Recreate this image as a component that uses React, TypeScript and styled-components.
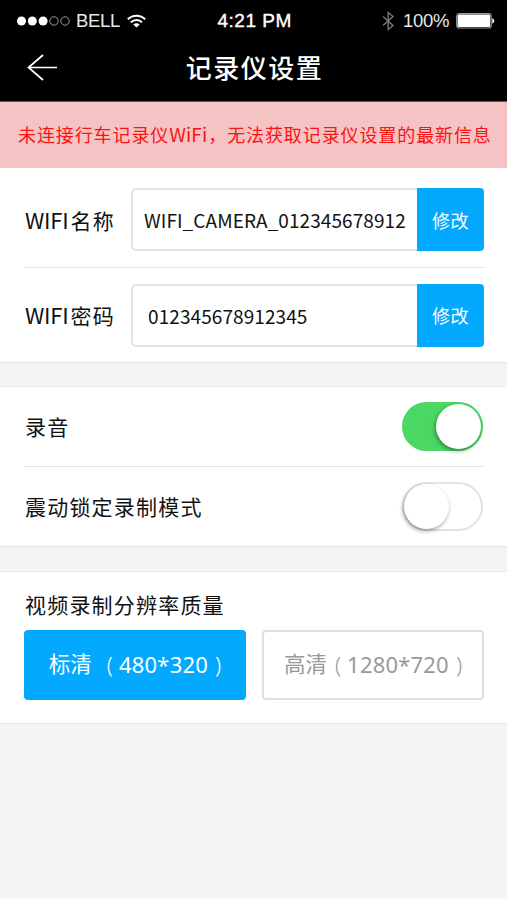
import React, { useState } from "react"
import styled, { createGlobalStyle } from "styled-components"

const GlobalStyle = createGlobalStyle`
  * {
    box-sizing: border-box;
  }
  body {
    margin: 0;
    background: #f4f4f4;
    font-family: "Noto Sans CJK SC", "Noto Sans", sans-serif;
    color: #111;
  }
  button {
    font-family: inherit;
    border: 0;
    padding: 0;
    margin: 0;
    cursor: pointer;
  }
`

const PageTag = styled.div`
  width: 507px;
  height: 900px;
  overflow: hidden;
  background: #f4f4f4;
  border-bottom: 2px solid #fafafa;
`

const HeaderTag = styled.header`
  height: 102px;
  background: #000;
  color: #fff;
  border-bottom: 1px solid #6b5556;
`

const StatusBarTag = styled.div`
  display: grid;
  grid-template-columns: 1fr auto 1fr;
  align-items: center;
  height: 41px;
  padding: 0 12px 0 17px;
  font-family: "Liberation Sans", Arial, sans-serif;
  line-height: 41px;
`

const StatusGroupTag = styled.div<{ $end?: boolean }>`
  display: flex;
  align-items: center;
  justify-content: ${(p) => (p.$end ? "flex-end" : "flex-start")};
  svg {
    flex: none;
  }
`

const StatusTextTag = styled.span<{ $width: number; $indent: number }>`
  width: ${(p) => p.$width}px;
  padding-left: ${(p) => p.$indent}px;
  font-size: 18.5px;
  letter-spacing: -0.3px;
  color: #e8e8e8;
  white-space: nowrap;
`

const ClockTag = styled.span`
  width: 77px;
  font-size: 19px;
  letter-spacing: 0.5px;
  -webkit-text-stroke: 0.4px #fff;
  white-space: nowrap;
`

const TitleBarTag = styled.div`
  display: grid;
  grid-template-columns: 60px 1fr 60px;
  align-items: center;
  height: 52px;
`

const BackTag = styled.button`
  background: none;
  color: #fff;
  padding-left: 26px;
  svg {
    display: block;
  }
`

const TitleTag = styled.h1`
  margin: 0;
  padding-left: 2px;
  font-size: 26px;
  font-weight: 500;
  line-height: 52px;
  letter-spacing: 1.5px;
  text-align: center;
`

const NoticeTag = styled.div`
  height: 66px;
  padding-left: 18px;
  background: #f6c3c5;
  color: #fb1212;
  font-size: 18px;
  line-height: 64px;
  letter-spacing: 0.9px;
  white-space: nowrap;
`

const NoticeLatinTag = styled.span`
  margin-right: 1px;
  font-size: 19px;
  letter-spacing: 0.1px;
`

const SectionTag = styled.section<{ $first?: boolean }>`
  background: #fff;
  border: solid #e8e8e8;
  border-width: ${(p) => (p.$first ? "0 0 1px" : "1px 0")};
  margin-bottom: ${(p) => (p.$first ? 23 : 24)}px;
`

const RowTag = styled.div<{ $height: number; $divider?: boolean; $top?: number }>`
  display: flex;
  align-items: center;
  justify-content: space-between;
  height: ${(p) => p.$height}px;
  margin: 0 23px 0 24px;
  padding-top: ${(p) => p.$top || 0}px;
  border-bottom: ${(p) => (p.$divider ? "1px solid #e4e4e4" : "0")};
`

const LabelTag = styled.span`
  padding: 0 0 1px 1px;
  font-size: 21px;
  line-height: 30px;
  letter-spacing: 1.2px;
  white-space: nowrap;
`

const LabelLatinTag = styled.span`
  margin-right: 2px;
  font-size: 22px;
  letter-spacing: -0.2px;
`

const FieldTag = styled.div`
  display: flex;
  width: 353px;
  height: 63px;
`

const ValueTag = styled.div<{ $indent: number }>`
  flex: 1;
  border: 2px solid #e2e2e2;
  border-right: 0;
  border-radius: 5px 0 0 5px;
  padding-left: ${(p) => p.$indent}px;
  font-size: 19px;
  line-height: 59px;
  letter-spacing: 0.08px;
  white-space: nowrap;
`

const EditTag = styled.button`
  width: 67px;
  border-radius: 0 4px 4px 0;
  background: #02a9fe;
  color: #fff;
  font-size: 18px;
  letter-spacing: 0.6px;
`

const SwitchTag = styled.button<{ $on: boolean }>`
  display: flex;
  align-items: center;
  justify-content: ${(p) => (p.$on ? "flex-end" : "flex-start")};
  width: 81px;
  height: 49px;
  margin-right: 1px;
  padding: 0 2px;
  border-radius: 25px;
  background: ${(p) => (p.$on ? "#4bd763" : "#fff")};
  box-shadow: ${(p) => (p.$on ? "none" : "inset 0 0 0 2px #e3e3e3")};
`

const KnobTag = styled.span`
  width: 45px;
  height: 45px;
  border-radius: 50%;
  background: #fff;
  box-shadow: -1px 2px 4px rgba(0, 0, 0, 0.38);
`

const QualityTitleTag = styled.div`
  height: 57px;
  padding: 4px 0 0 25px;
  font-size: 21px;
  line-height: 57px;
  letter-spacing: 1.2px;
`

const QualityTag = styled.div`
  display: flex;
  gap: 16px;
  height: 94px;
  padding: 1px 23px 23px 24px;
`

const OptionTag = styled.button<{ $active: boolean }>`
  display: flex;
  flex: 1;
  align-items: center;
  justify-content: center;
  padding-bottom: 2px;
  border-radius: 4px;
  border: 2px solid ${(p) => (p.$active ? "#02a9fe" : "#e0e0e0")};
  background: ${(p) => (p.$active ? "#02a9fe" : "#fff")};
  color: ${(p) => (p.$active ? "#fff" : "#999")};
  font-family: "Noto Sans", "Noto Sans CJK SC", sans-serif;
  font-size: 22px;
  line-height: 30px;
  white-space: nowrap;
`

const OptionNameTag = styled.span<{ $gap: number }>`
  margin-right: ${(p) => p.$gap}px;
  font-size: 21.5px;
`

const OptionSizeTag = styled.span`
  margin: 0 7px 0 6px;
  letter-spacing: 0.2px;
`

const ParenTag = styled.span`
  font-weight: 300;
`

const SignalIcon = () => (
  <svg width="54" height="12" viewBox="0 0 54 12">
    {[4.5, 15.3, 26.1].map((x) => (
      <circle key={x} cx={x} cy="6" r="4.5" fill="#fff" />
    ))}
    {[37, 48].map((x) => (
      <circle key={x} cx={x} cy="6" r="4.2" fill="none" stroke="#999" />
    ))}
  </svg>
)

const WifiIcon = () => (
  <svg width="19" height="14" viewBox="0 0 19 14" fill="none" stroke="#fff" strokeWidth="2">
    <path d="M0.8 5.2a12.4 12.4 0 0 1 17.4 0" />
    <path d="M3.9 8.4a8 8 0 0 1 11.2 0" />
    <path d="M9.5 13.6L6.3 10.5a4.6 4.6 0 0 1 6.4 0z" fill="#fff" stroke="none" />
  </svg>
)

const BluetoothIcon = () => (
  <svg width="13" height="20" viewBox="0 0 13 20" fill="none" stroke="#777" strokeWidth="1.4">
    <path d="M1 5.5l10 9-4.8 4V1.5l4.8 4-10 9" />
  </svg>
)

const BatteryIcon = () => (
  <svg width="39" height="16" viewBox="0 0 39 16">
    <rect x="0.7" y="0.7" width="34.5" height="14.3" rx="2.5" fill="none" stroke="#999" strokeWidth="1.2" />
    <rect x="1.6" y="1.6" width="32.6" height="12.4" rx="1.6" fill="#fff" />
    <path d="M36.3 5.2c2.6 0.7 2.6 4.7 0 5.4z" fill="#fff" />
  </svg>
)

const BackIcon = () => (
  <svg width="32" height="27" viewBox="0 0 32 27" fill="none" stroke="#fff" strokeWidth="1.7">
    <path d="M17 1L2.5 13.5L17 26M2.5 13.5H31" />
  </svg>
)

const options = [
  { name: "标清", size: "480*320", gap: 15 },
  { name: "高清", size: "1280*720", gap: 8 },
]

const App = (): React.ReactElement => {
  const [audio, setAudio] = useState(true)
  const [lock, setLock] = useState(false)
  const [quality, setQuality] = useState(0)
  return (
    <>
      <GlobalStyle />
      <PageTag>
        <HeaderTag>
          <StatusBarTag>
            <StatusGroupTag>
              <SignalIcon />
              <StatusTextTag $width={56} $indent={5}>
                BELL
              </StatusTextTag>
              <WifiIcon />
            </StatusGroupTag>
            <ClockTag>4:21 PM</ClockTag>
            <StatusGroupTag $end>
              <BluetoothIcon />
              <StatusTextTag $width={61} $indent={8}>
                100%
              </StatusTextTag>
              <BatteryIcon />
            </StatusGroupTag>
          </StatusBarTag>
          <TitleBarTag>
            <BackTag aria-label="返回">
              <BackIcon />
            </BackTag>
            <TitleTag>记录仪设置</TitleTag>
          </TitleBarTag>
        </HeaderTag>
        <NoticeTag>
          未连接行车记录仪<NoticeLatinTag>WiFi</NoticeLatinTag>，无法获取记录仪设置的最新信息
        </NoticeTag>
        <SectionTag $first>
          <RowTag $height={100} $top={4} $divider>
            <LabelTag>
              <LabelLatinTag>WIFI</LabelLatinTag>名称
            </LabelTag>
            <FieldTag>
              <ValueTag $indent={11}>WIFI_CAMERA_012345678912</ValueTag>
              <EditTag>修改</EditTag>
            </FieldTag>
          </RowTag>
          <RowTag $height={94}>
            <LabelTag>
              <LabelLatinTag>WIFI</LabelLatinTag>密码
            </LabelTag>
            <FieldTag>
              <ValueTag $indent={15}>012345678912345</ValueTag>
              <EditTag>修改</EditTag>
            </FieldTag>
          </RowTag>
        </SectionTag>
        <SectionTag>
          <RowTag $height={80} $divider>
            <LabelTag>录音</LabelTag>
            <SwitchTag $on={audio} onClick={() => setAudio(!audio)}>
              <KnobTag />
            </SwitchTag>
          </RowTag>
          <RowTag $height={79}>
            <LabelTag>震动锁定录制模式</LabelTag>
            <SwitchTag $on={lock} onClick={() => setLock(!lock)}>
              <KnobTag />
            </SwitchTag>
          </RowTag>
        </SectionTag>
        <SectionTag>
          <QualityTitleTag>视频录制分辨率质量</QualityTitleTag>
          <QualityTag>
            {options.map((option, i) => (
              <OptionTag key={option.name} $active={quality === i} onClick={() => setQuality(i)}>
                <OptionNameTag $gap={option.gap}>{option.name}</OptionNameTag>
                <ParenTag>(</ParenTag>
                <OptionSizeTag>{option.size}</OptionSizeTag>
                <ParenTag>)</ParenTag>
              </OptionTag>
            ))}
          </QualityTag>
        </SectionTag>
      </PageTag>
    </>
  )
}

export default App
